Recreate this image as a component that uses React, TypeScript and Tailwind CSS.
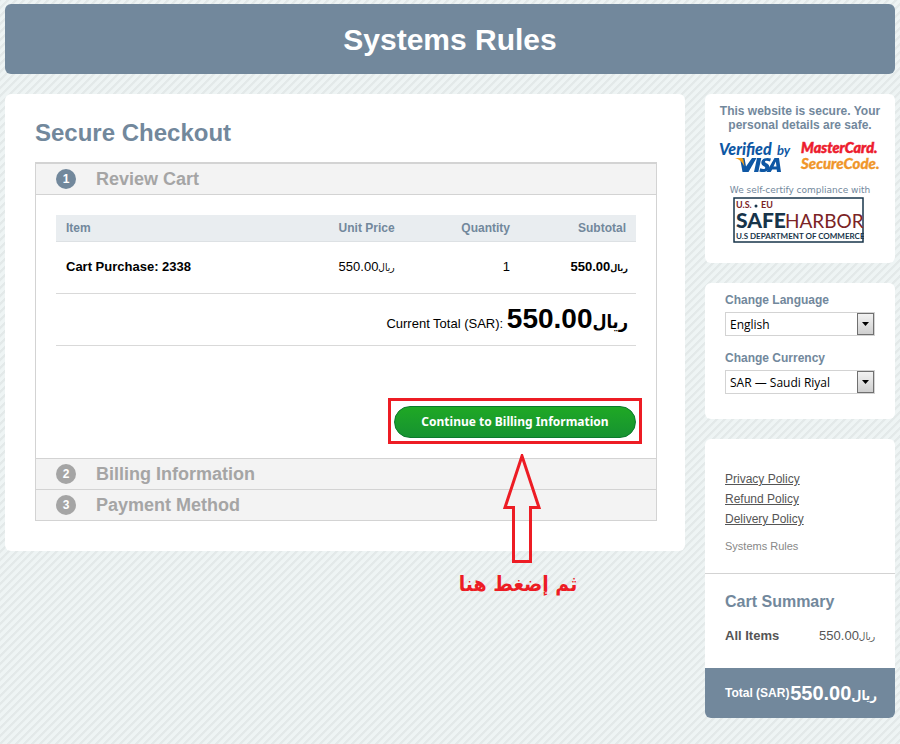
import type { ReactNode } from "react";

interface CartItem {
  id: string;
  name: string;
  price: string;
  quantity: number;
  subtotal: string;
}

const items: CartItem[] = [
  { id: "2338", name: "Cart Purchase: 2338", price: "550.00", quantity: 1, subtotal: "550.00" },
];

const policies = ["Privacy Policy", "Refund Policy", "Delivery Policy"];

const Riyal = ({ className = "" }: { className?: string }) => (
  <span className={`font-['DejaVu_Sans_Condensed','DejaVu_Sans',sans-serif] ${className}`}>ريال</span>
);

const StepHeader = ({ step, title, active = false }: { step: number; title: string; active?: boolean }) => (
  <h2 className="flex h-[31px] items-center gap-5 border-b border-[#d3d3d3] bg-[#f3f3f3] px-5 text-lg font-bold text-[#a5a5a5]">
    <span
      className={`flex size-5 items-center justify-center rounded-full text-xs text-white ${
        active ? "bg-[#72889c]" : "bg-[#a5a5a5]"
      }`}
    >
      {step}
    </span>
    {title}
  </h2>
);

const SelectField = ({ id, label, options }: { id: string; label: string; options: string[] }) => (
  <div>
    <label htmlFor={id} className="block text-xs leading-4 font-bold text-[#72889c]">
      {label}
    </label>
    <div className="relative mt-1 h-6">
      <select
        id={id}
        className="block h-6 w-full appearance-none border border-[#d3d3d3] bg-white px-1 pt-0.5 font-['Open_Sans',sans-serif] text-xs text-black"
      >
        {options.map((option) => (
          <option key={option}>{option}</option>
        ))}
      </select>
      <span className="pointer-events-none absolute inset-y-px right-px flex w-[17px] items-center justify-center border border-[#707070] bg-linear-to-b from-[#f2f2f2] to-[#cfcfcf]">
        <svg width="7" height="4" viewBox="0 0 7 4" aria-hidden="true">
          <path d="M0 0h7L3.5 4z" fill="#000" />
        </svg>
      </span>
    </div>
  </div>
);

const VerifiedByVisa = () => (
  <svg width="73" height="34" viewBox="0 0 73 34" role="img" aria-label="Verified by Visa">
    <g fill="#0e57a4" fontFamily="Lato, sans-serif" fontStyle="italic" fontWeight="900">
      <text x="0" y="15" fontSize="16">Verified</text>
      <text x="58" y="15" fontSize="13" fontWeight="700">by</text>
    </g>
    <g fill="#0e57a4">
      <path d="M21 18h4.500l1.500 8.500L33 18h4.500L29.500 32h-6z" />
      <path d="M38 18h4.300l-3 14h-4.300z" />
      <path d="M52 18.500l-1 3c-3-1.200-5-1-5 .3 0 1.600 4.300 1.700 4.300 5 0 4.800-5.300 6.200-10 4.700l1-3.200c2.500 1.100 5 1 5-.5 0-1.700-4-1.800-4-5 0-4.300 5-5.800 9.700-4.300z" />
      <path fillRule="evenodd" d="M55.500 18h4.500l2 14h-4l-.3-2.500h-4.500L51.700 32h-4.200zM56.800 21.500l-2.300 5h3z" />
    </g>
    <path d="M16 18h6c1.500 0 2.100.5 2.400 2l1 6.500c-2-4.500-4.800-7.200-9.400-8.500z" fill="#f5a11c" />
  </svg>
);

const MasterCardSecureCode = () => (
  <svg width="81" height="34" viewBox="0 0 81 34" role="img" aria-label="MasterCard SecureCode">
    <g fontFamily="Lato, sans-serif" fontStyle="italic" fontWeight="900">
      <text x="1" y="13" fontSize="14.500" fill="#ed1c2e" stroke="#ed1c2e" strokeWidth=".5">MasterCard.</text>
      <text x="1" y="29" fontSize="15" fill="#f0962a" stroke="#f0962a" strokeWidth=".3">SecureCode.</text>
    </g>
  </svg>
);

const SafeHarbor = () => (
  <svg width="131" height="46" viewBox="0 0 131 46" role="img" aria-label="U.S. EU Safe Harbor, U.S Department of Commerce">
    <rect x="1" y="1" width="129" height="44" fill="#fff" stroke="#17344a" strokeWidth="1.500" />
    <g fontFamily="Lato, sans-serif">
      <text x="3" y="11" fontSize="9" fontWeight="700" fill="#7b2425">U.S.</text>
      <circle cx="23" cy="9" r="1.500" fill="#17344a" />
      <text x="28" y="11" fontSize="9" fontWeight="700" fill="#7b2425">EU</text>
      <text x="3" y="31" fontSize="21" fontWeight="900" fill="#17344a">SAFE</text>
      <text x="52" y="31" fontSize="19" fill="#7b2425">HARBOR</text>
      <text x="3" y="42" fontSize="8" fontWeight="700" fill="#17344a">U.S DEPARTMENT OF COMMERCE</text>
    </g>
  </svg>
);

const SideCard = ({ children, className = "" }: { children: ReactNode; className?: string }) => (
  <section className={`overflow-hidden rounded-md bg-white ${className}`}>{children}</section>
);

// Red frame, arrow and caption that point at the continue button
const ContinueHint = () => (
  <>
    <span className="pointer-events-none absolute -inset-x-1.5 -top-2 -bottom-1.5 border-3 border-[#ed1c24]" />
    <div className="pointer-events-none absolute top-12 right-[26px] flex w-44 flex-col items-center text-[#ed1c24]">
      <svg width="38" height="112" viewBox="0 0 38 112" fill="none" stroke="currentColor" strokeWidth="3" aria-hidden="true">
        <path d="M19 2L2 53.500h8.500v54h17v-54H36z" />
      </svg>
      <p dir="rtl" className="pr-2 font-['DejaVu_Sans_Condensed','DejaVu_Sans',sans-serif] text-[21px] leading-9 font-bold whitespace-nowrap">
        ثم إضغط هنا
      </p>
    </div>
  </>
);

export default function App() {
  return (
    <div className="min-h-screen bg-[#eef4f4] bg-[linear-gradient(135deg,#e3e9e9_8%,#eef4f4_14%,#eef4f4_38%,#e3e9e9_44%,#e3e9e9_58%,#eef4f4_64%,#eef4f4_88%,#e3e9e9_94%)] bg-[length:8px_8px] px-[5px] pt-1 pb-6 font-['Liberation_Sans',Arial,sans-serif] text-[13px] text-black">
      <header className="flex h-[70px] items-center justify-center rounded-md bg-[#72889c]">
        <div className="pt-0.5 text-3xl font-bold text-white">Systems Rules</div>
      </header>

      <div className="mt-5 flex items-start gap-5">
        <main className="min-w-0 flex-1 rounded-md bg-white pt-5 pr-7 pb-[30px] pl-[30px]">
          <h1 className="text-2xl leading-[38px] font-bold text-[#72889c]">Secure Checkout</h1>

          <div className="mt-2.5 border-x border-t-2 border-[#d3d3d3]">
            <StepHeader step={1} title="Review Cart" active />
            <div className="border-b border-[#d3d3d3] p-5">
              <table className="w-full table-fixed">
                <thead className="bg-[#e9edf0] text-xs text-[#72889c]">
                  <tr className="h-[26px] border-b border-[#dde1e4]">
                    <th className="w-[47%] px-2.5 text-left">Item</th>
                    <th className="w-[14%] px-2.5 text-left whitespace-nowrap">Unit Price</th>
                    <th className="w-[19%] px-2.5 text-right">Quantity</th>
                    <th className="w-[20%] px-2.5 text-right">Subtotal</th>
                  </tr>
                </thead>
                <tbody>
                  {items.map((item) => (
                    <tr key={item.id} className="h-[52px] border-b border-[#d9d9d9]">
                      <td className="px-2.5 font-bold">{item.name}</td>
                      <td className="px-2.5 whitespace-nowrap">
                        {item.price}
                        <Riyal className="text-[10px]" />
                      </td>
                      <td className="px-2.5 text-right">{item.quantity}</td>
                      <td className="px-2 text-right font-bold whitespace-nowrap">
                        {item.subtotal}
                        <Riyal className="text-[9px]" />
                      </td>
                    </tr>
                  ))}
                </tbody>
                <tfoot>
                  <tr className="h-[52px] border-b border-[#d9d9d9]">
                    <td colSpan={4} className="px-2 text-right">
                      Current Total (SAR):{" "}
                      <strong className="text-[28px] leading-10">
                        550.00
                        <Riyal className="text-lg" />
                      </strong>
                    </td>
                  </tr>
                </tfoot>
              </table>

              <div className="mt-[60px] flex justify-end">
                <div className="relative">
                  <button
                    type="button"
                    className="block h-8 w-[242px] rounded-full border border-[#0b7a2c] bg-linear-to-b from-[#1fa824] to-[#169330] pt-px font-['Noto_Sans',sans-serif] text-xs font-bold text-white"
                  >
                    Continue to Billing Information
                  </button>
                  <ContinueHint />
                </div>
              </div>
            </div>
            <StepHeader step={2} title="Billing Information" />
            <StepHeader step={3} title="Payment Method" />
          </div>
        </main>

        <aside className="w-[190px] shrink-0 space-y-5">
          <SideCard className="flex h-[169px] flex-col items-center pt-2.5 text-center">
            <p className="px-2 text-xs leading-[14px] font-bold text-[#72889c]">
              This website is secure. Your personal details are safe.
            </p>
            <div className="mt-2 flex gap-2">
              <VerifiedByVisa />
              <MasterCardSecureCode />
            </div>
            <p className="mt-2.5 font-['DejaVu_Sans',sans-serif] text-[9px] leading-[13px] whitespace-nowrap text-[#72889c]">
              We self-certify compliance with
            </p>
            <div className="pr-1">
              <SafeHarbor />
            </div>
          </SideCard>

          <SideCard className="space-y-3.5 px-5 pt-[9px] pb-[25px]">
            <SelectField id="language" label="Change Language" options={["English", "العربية"]} />
            <SelectField id="currency" label="Change Currency" options={["SAR — Saudi Riyal", "USD — US Dollar"]} />
          </SideCard>

          <SideCard>
            <div className="border-b border-[#d3d3d3] px-5 pt-[30px] pb-5">
              <ul className="text-xs leading-5 text-[#555]">
                {policies.map((policy) => (
                  <li key={policy}>
                    <a href="#" className="underline">
                      {policy}
                    </a>
                  </li>
                ))}
              </ul>
              <p className="mt-2.5 text-[11px] leading-[14px] text-[#888]">Systems Rules</p>
            </div>
            <div className="px-5 pt-[18px] pb-[22px]">
              <h2 className="text-base leading-5 font-bold text-[#72889c]">Cart Summary</h2>
              <div className="mt-3.5 flex h-5 items-center justify-between text-[13px] text-[#555]">
                <strong>All Items</strong>
                <span>
                  550.00
                  <Riyal className="text-[10px]" />
                </span>
              </div>
            </div>
            <div className="flex h-[50px] items-center justify-between bg-[#72889c] pr-[18px] pl-5 font-bold whitespace-nowrap text-white">
              <span className="text-xs">Total (SAR)</span>
              <span className="text-xl">
                550.00
                <Riyal className="text-[13px]" />
              </span>
            </div>
          </SideCard>
        </aside>
      </div>
    </div>
  );
}
